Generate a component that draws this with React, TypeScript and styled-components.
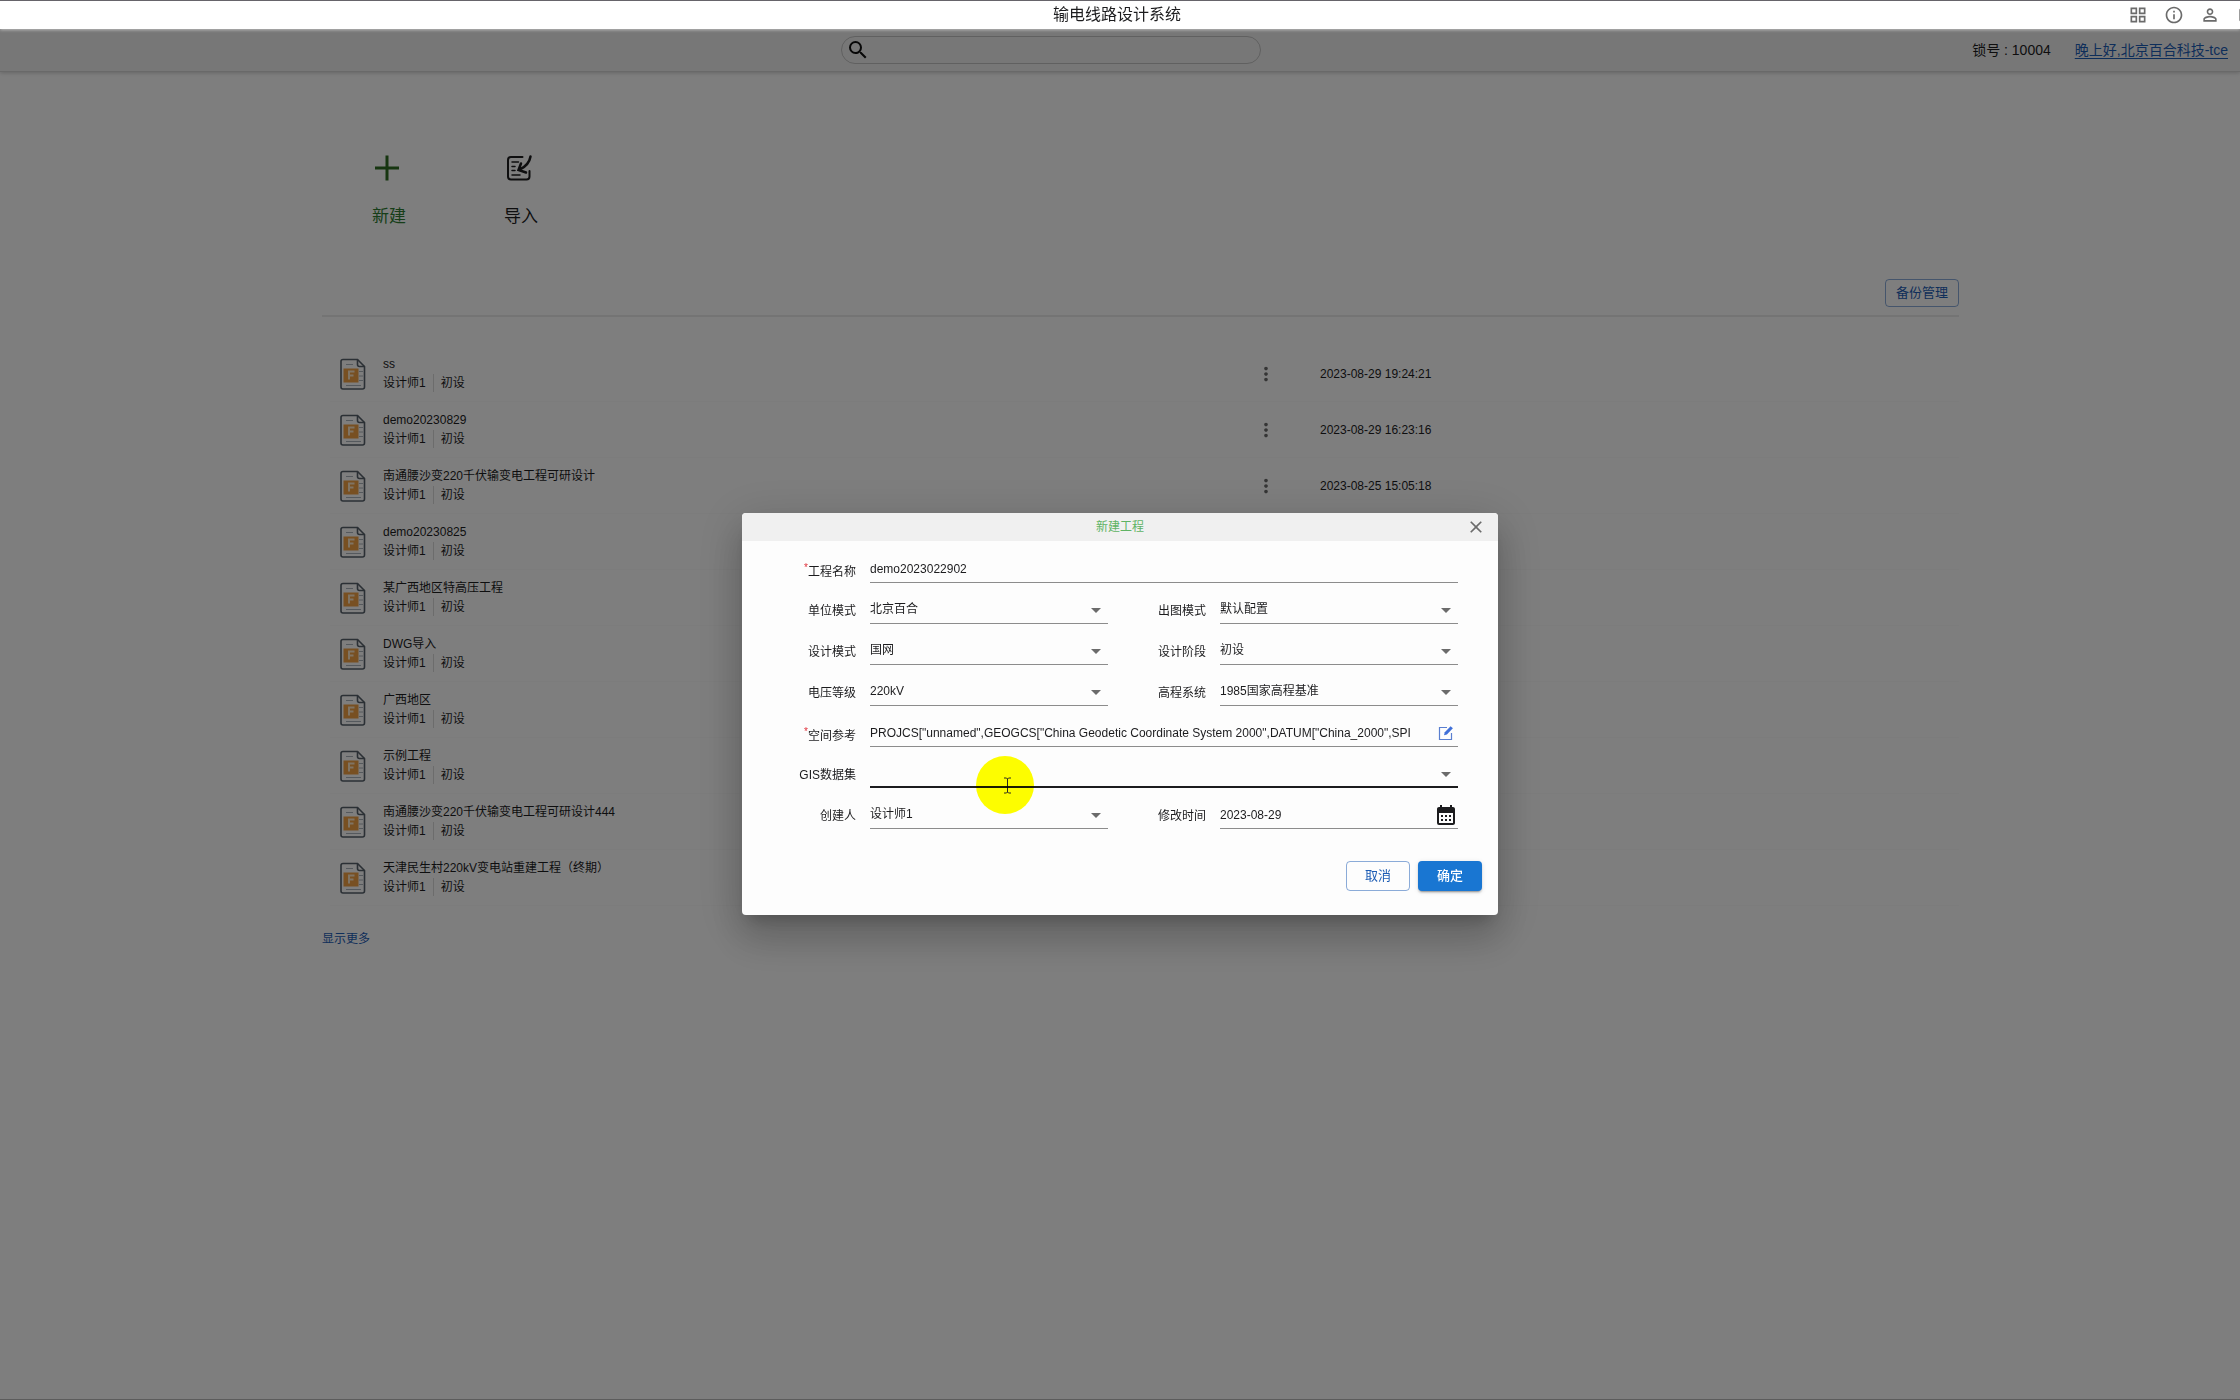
import React from "react";
import styled, { createGlobalStyle } from "styled-components";
import {
  MdSearch,
  MdClose,
  MdArrowDropDown,
  MdCalendarMonth,
  MdMoreVert,
  MdOutlineGridView,
  MdOutlineInfo,
  MdPersonOutline,
  MdCropSquare,
} from "react-icons/md";

const Global = createGlobalStyle`
  *, *::before, *::after { box-sizing: border-box; }
  body {
    margin: 0;
    background: #fdfdfd;
    color: #1c1c1e;
    font-family: "Liberation Sans", "Noto Sans CJK SC", sans-serif;
    font-size: 12px;
    line-height: 18px;
    overflow: hidden;
  }
  button, input, select { font: inherit; color: inherit; }
  button { cursor: pointer; }
`;

const Page = styled.div`
  min-height: 100vh;
  display: flex;
  flex-direction: column;
`;

const TitleBar = styled.header`
  position: relative;
  z-index: 3;
  height: 29px;
  display: grid;
  grid-template-columns: 1fr auto 1fr;
  align-items: center;
  background: #ffffff;
  border-top: 1px solid #66646a;
  box-shadow: 0 1px 3px rgba(255, 255, 255, 0.5);
`;

const Title = styled.h1`
  grid-column: 2;
  margin: 0;
  padding-right: 6px;
  font-size: 16px;
  font-weight: 400;
  line-height: 24px;
`;

const TitleActions = styled.div`
  height: 28px;
  display: flex;
  align-items: center;
  justify-content: flex-end;
  gap: 16px;
  margin-right: -16px;
  clip-path: inset(0 16px 0 0);
`;

const IconButton = styled.button`
  display: flex;
  padding: 0;
  border: 0;
  background: none;
  color: #6b6b6b;
`;

const SearchBar = styled.div`
  height: 43px;
  display: grid;
  grid-template-columns: 6fr 420px 7fr;
  align-items: center;
  padding: 0 12px;
  background: #efefef;
  border-bottom: 1px solid #d2d2d2;
  box-shadow: 0 1px 4px rgba(0, 0, 0, 0.2);
`;

const SearchBox = styled.label`
  grid-column: 2;
  height: 28px;
  display: flex;
  align-items: center;
  padding: 0 16px 0 4px;
  border: 1px solid #c0c0c0;
  border-radius: 14px;
  color: #101010;

  input {
    flex: 1;
    border: 0;
    outline: 0;
    background: none;
  }
`;

const Account = styled.div`
  display: flex;
  justify-content: flex-end;
  gap: 24px;
  font-size: 14px;
  line-height: 20px;
`;

const Link = styled.a<{ $underline?: boolean }>`
  color: #1c5cb4;
  text-decoration: ${(p) => (p.$underline ? "underline" : "none")};
  text-underline-offset: 3px;
`;

const Main = styled.main`
  flex: 1;
  padding: 83px 281px 0 322px;
`;

const Actions = styled.div`
  display: flex;
  gap: 72px;
  padding-left: 37px;
`;

const Action = styled.button<{ $primary?: boolean }>`
  width: 60px;
  display: flex;
  flex-direction: column;
  align-items: center;
  gap: 23px;
  padding: 0;
  border: 0;
  background: none;
  color: ${(p) => (p.$primary ? "#2e7d32" : "#1c1c1e")};
  font-size: 17px;
  line-height: 26px;

  svg { margin-right: 4px; }
`;

const Toolbar = styled.div`
  display: flex;
  justify-content: flex-end;
  margin-top: 49px;
  padding-bottom: 8px;
  border-bottom: 2px solid #e8e8e8;
`;

const Outlined = styled.button<{ $width: number; $height: number }>`
  width: ${(p) => p.$width}px;
  height: ${(p) => p.$height}px;
  padding: 0;
  border: 1px solid rgba(25, 90, 180, 0.5);
  border-radius: 4px;
  background: none;
  color: #1c5cb4;
  font-size: 13px;
  line-height: 20px;
`;

const Filled = styled(Outlined)`
  border: 0;
  background: #1976d2;
  color: #ffffff;
  font-weight: 500;
  box-shadow: 0 3px 1px -2px rgba(0, 0, 0, 0.2), 0 2px 2px rgba(0, 0, 0, 0.14),
    0 1px 5px rgba(0, 0, 0, 0.12);
`;

const List = styled.ul`
  margin: 29px 0 0 8px;
  padding: 0;
  list-style: none;
`;

const Row = styled.li`
  height: 56px;
  display: grid;
  grid-template-columns: 53px 1fr 24px 41px 639px;
  align-items: center;
  border-bottom: 1px solid #f9f9f9;
`;

const FileCell = styled.div`
  display: flex;
  padding-left: 10px;
`;

const Name = styled.div`
  line-height: 19px;
`;

const Meta = styled.div`
  display: flex;
  align-items: center;
  line-height: 19px;

  span + span {
    margin-left: 7px;
    padding-left: 7px;
    border-left: 1px solid #d8d8d8;
    line-height: 18px;
  }
`;

const Stamp = styled.time`
  grid-column: 5;
`;

const More = styled.div`
  padding: 24px 0;
`;

const Backdrop = styled.div`
  position: fixed;
  inset: 29px 0 0;
  z-index: 2;
  display: flex;
  align-items: center;
  justify-content: center;
  background: rgba(0, 0, 0, 0.5);
  border-bottom: 1px solid #5c5c5c;
`;

const Dialog = styled.section`
  position: relative;
  width: 756px;
  background: #fdfdfd;
  border-radius: 4px;
  box-shadow: 0 11px 15px -7px rgba(0, 0, 0, 0.2), 0 24px 38px 3px rgba(0, 0, 0, 0.14),
    0 9px 46px 8px rgba(0, 0, 0, 0.12);
`;

const DialogHeader = styled.div`
  height: 28px;
  display: grid;
  grid-template-columns: 1fr auto 1fr;
  align-items: center;
  padding: 0 12px;
  border-radius: 4px 4px 0 0;
  background: #f0f0f0;

  h2 {
    grid-column: 2;
    margin: 0;
    color: #5fb364;
    font-size: 12px;
    font-weight: 400;
  }
  button { justify-self: end; }
`;

const Form = styled.form`
  display: grid;
  grid-template-columns: 114px 1fr 84px 1fr;
  grid-auto-rows: 41px;
  column-gap: 14px;
  padding: 1px 40px 0 0;
`;

const Label = styled.label<{ $required?: boolean }>`
  padding-top: ${(p) => (p.$required ? 21 : 19)}px;
  text-align: right;
  line-height: 18px;
`;

const Required = styled.span`
  color: #e0303a;
  font-size: 10px;
  line-height: 10px;
  vertical-align: 5px;
`;

const Control = styled.div<{ $wide?: boolean; $focused?: boolean }>`
  grid-column: ${(p) => (p.$wide ? "span 3" : "span 1")};
  min-width: 0;
  display: grid;
  grid-template-columns: 1fr 24px;
  align-items: center;
  padding-top: 14px;
  border-bottom: ${(p) => (p.$focused ? "2px solid #1c1c1e" : "1px solid #8c8c8c")};

  input, select {
    grid-area: 1 / 1 / 2 / 2;
    min-width: 0;
    width: 100%;
    height: 22px;
    padding: 0;
    border: 0;
    outline: 0;
    background: none;
    appearance: none;
    line-height: 18px;
  }
  select {
    grid-area: 1 / 1 / 2 / 3;
    padding: 0 24px 2px 0;
  }
  > svg {
    grid-area: 1 / 2 / 2 / 3;
    color: #6b6b6b;
    pointer-events: none;
  }
  button {
    justify-content: center;
    color: #1c1c1e;
  }
`;

const Footer = styled.div`
  display: flex;
  justify-content: flex-end;
  gap: 8px;
  padding: 32px 16px 24px;
`;

const Pointer = styled.div`
  position: absolute;
  left: 234px;
  top: 243px;
  width: 58px;
  height: 58px;
  display: flex;
  align-items: center;
  justify-content: center;
  border-radius: 50%;
  background: #ffff00;
  mix-blend-mode: multiply;
  pointer-events: none;
  padding-left: 4px;
`;

const PlusIcon = () => (
  <svg width="26" height="26" viewBox="0 0 26 26" fill="none" stroke="#2e6d22" strokeWidth="3">
    <path d="M13 0.5v25M1 13h24" />
  </svg>
);

const ImportIcon = () => (
  <svg width="26" height="26" viewBox="0 0 26 26" fill="none" stroke="#1c1c1e" strokeWidth="2" strokeLinecap="round">
    <path d="M16.500 2H5Q2 2 2 5v16.500q0 3 3 3h15.500q3 0 3-3V16" />
    <path d="M24.500 1.500C23.500 8 19.500 12 13 15M15 8.500L12.500 15l7.500 2.500" strokeWidth="2.500" />
    <path d="M6 7h6.500M6 11.500h3M6 15.500h3M6 20h8" strokeWidth="1.500" />
  </svg>
);

const FileIcon = () => (
  <svg width="26" height="32" viewBox="0 0 26 32" fill="none">
    <path d="M3 1.500h14.500l7 7V29q0 2-2 2H3q-2 0-2-2V3.500q0-2 2-2z" fill="#fdfdfd" stroke="#56606a" strokeWidth="1.600" />
    <path d="M17.500 1.500v5q0 2 2 2h5" stroke="#56606a" strokeWidth="1.600" />
    <path d="M6 6.500h7M19 13.500h4M19 18h4M19 22.500h4M6 27.500h15" stroke="#aab2ba" />
    <rect x="3.500" y="10.500" width="15" height="14" fill="#f0a044" />
    <path d="M9 21.500v-8h5.500M9 17.500h4.500" stroke="#ffe8c8" strokeWidth="2" />
  </svg>
);

const EditIcon = () => (
  <svg width="16" height="16" viewBox="0 0 16 16" fill="none">
    <path d="M9 2.500H1.500v12h12V8" stroke="#5a7fd0" strokeWidth="1.200" />
    <path d="M6 10.200l.8-3L12.600 1.200l2.300 2-6 6.200z" fill="#3f6fd8" />
  </svg>
);

const BeamIcon = () => (
  <svg width="9" height="17" viewBox="0 0 9 17" fill="none" stroke="#2a2a20">
    <path d="M1 1h2.500l1 1 1-1H8M1 16h2.500l1-1 1 1H8M4.500 2v13" />
  </svg>
);

const projects = [
  { name: "ss", time: "2023-08-29 19:24:21" },
  { name: "demo20230829", time: "2023-08-29 16:23:16" },
  { name: "南通腰沙变220千伏输变电工程可研设计", time: "2023-08-25 15:05:18" },
  { name: "demo20230825" },
  { name: "某广西地区特高压工程" },
  { name: "DWG导入" },
  { name: "广西地区" },
  { name: "示例工程" },
  { name: "南通腰沙变220千伏输变电工程可研设计444" },
  { name: "天津民生村220kV变电站重建工程（终期）" },
];

type FieldProps = { id: string; label: string; value?: string; wide?: boolean; focused?: boolean };

const SelectField = ({ id, label, value, wide, focused }: FieldProps) => (
  <>
    <Label htmlFor={id}>{label}</Label>
    <Control $wide={wide} $focused={focused}>
      <select id={id}>
        <option>{value}</option>
      </select>
      <MdArrowDropDown size={24} />
    </Control>
  </>
);

type TextProps = FieldProps & { required?: boolean; children?: React.ReactNode };

const TextField = ({ id, label, value, wide, required, children }: TextProps) => (
  <>
    <Label htmlFor={id} $required={required}>
      {required && <Required>*</Required>}
      {label}
    </Label>
    <Control $wide={wide}>
      <input id={id} type="text" defaultValue={value} />
      {children}
    </Control>
  </>
);

export default function App() {
  return (
    <Page>
      <Global />
      <TitleBar>
        <Title>输电线路设计系统</Title>
        <TitleActions>
          <IconButton aria-label="应用"><MdOutlineGridView size={20} /></IconButton>
          <IconButton aria-label="关于"><MdOutlineInfo size={20} /></IconButton>
          <IconButton aria-label="用户"><MdPersonOutline size={20} /></IconButton>
          <IconButton aria-label="窗口"><MdCropSquare size={20} /></IconButton>
        </TitleActions>
      </TitleBar>

      <SearchBar>
        <SearchBox>
          <MdSearch size={24} />
          <input type="search" aria-label="搜索" />
        </SearchBox>
        <Account>
          <span>锁号 : 10004</span>
          <Link href="#account" $underline>晚上好,北京百合科技-tce</Link>
        </Account>
      </SearchBar>

      <Main>
        <Actions>
          <Action $primary><PlusIcon />新建</Action>
          <Action><ImportIcon />导入</Action>
        </Actions>
        <Toolbar>
          <Outlined $width={74} $height={28}>备份管理</Outlined>
        </Toolbar>
        <List>
          {projects.map((p) => (
            <Row key={p.name}>
              <FileCell><FileIcon /></FileCell>
              <div>
                <Name>{p.name}</Name>
                <Meta><span>设计师1</span><span>初设</span></Meta>
              </div>
              <IconButton aria-label="更多"><MdMoreVert size={22} /></IconButton>
              {p.time && <Stamp>{p.time}</Stamp>}
            </Row>
          ))}
        </List>
        <More><Link href="#more">显示更多</Link></More>
      </Main>

      <Backdrop>
        <Dialog role="dialog" aria-labelledby="dialog-title">
          <DialogHeader>
            <h2 id="dialog-title">新建工程</h2>
            <IconButton aria-label="关闭"><MdClose size={20} /></IconButton>
          </DialogHeader>
          <Form>
            <TextField id="name" label="工程名称" value="demo2023022902" wide required />
            <SelectField id="unit" label="单位模式" value="北京百合" />
            <SelectField id="plot" label="出图模式" value="默认配置" />
            <SelectField id="mode" label="设计模式" value="国网" />
            <SelectField id="stage" label="设计阶段" value="初设" />
            <SelectField id="voltage" label="电压等级" value="220kV" />
            <SelectField id="height" label="高程系统" value="1985国家高程基准" />
            <TextField
              id="spatial"
              label="空间参考"
              value={'PROJCS["unnamed",GEOGCS["China Geodetic Coordinate System 2000",DATUM["China_2000",SPI'}
              wide
              required
            >
              <IconButton type="button" aria-label="编辑"><EditIcon /></IconButton>
            </TextField>
            <SelectField id="gis" label="GIS数据集" wide focused />
            <SelectField id="author" label="创建人" value="设计师1" />
            <TextField id="date" label="修改时间" value="2023-08-29">
              <IconButton type="button" aria-label="日历"><MdCalendarMonth size={24} /></IconButton>
            </TextField>
          </Form>
          <Footer>
            <Outlined $width={64} $height={30}>取消</Outlined>
            <Filled $width={64} $height={30}>确定</Filled>
          </Footer>
          <Pointer><BeamIcon /></Pointer>
        </Dialog>
      </Backdrop>
    </Page>
  );
}
